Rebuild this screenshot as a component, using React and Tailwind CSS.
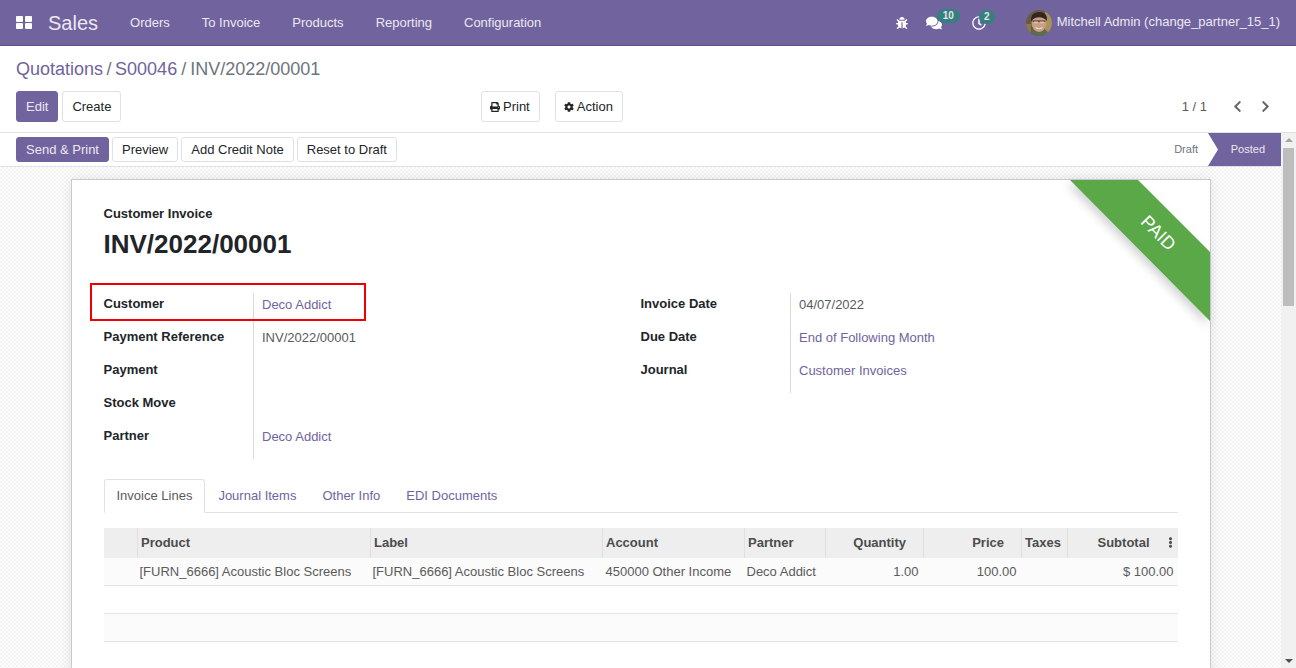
import React from "react";
import {
  FaBug,
  FaComments,
  FaRegClock,
  FaPrint,
  FaCog,
  FaChevronLeft,
  FaChevronRight,
  FaEllipsisV,
} from "react-icons/fa";

const navItems = ["Orders", "To Invoice", "Products", "Reporting", "Configuration"];

function AppsIcon() {
  return (
    <svg width="16" height="13" viewBox="0 0 16 13" fill="#fff">
      <rect x="0" y="0" width="7" height="6" rx="1" />
      <rect x="9" y="0" width="7" height="6" rx="1" />
      <rect x="0" y="7" width="7" height="6" rx="1" />
      <rect x="9" y="7" width="7" height="6" rx="1" />
    </svg>
  );
}

function Avatar() {
  return (
    <svg width="26" height="26" viewBox="0 0 26 26" className="rounded-full">
      <rect width="26" height="26" fill="#6a5a45" />
      <rect x="19" width="7" height="26" fill="#a8925f" />
      <rect y="14" width="5" height="12" fill="#8a7a4a" />
      <path d="M2 26 L6 20 L20 20 L25 26 Z" fill="#5f6b50" />
      <ellipse cx="13" cy="13" rx="7.5" ry="9" fill="#c99f84" />
      <path d="M5 12 Q4 2 13 2 Q22 2 21 11 Q17 6.5 11 7.5 Q7 8 5 12 Z" fill="#33261f" />
      <rect x="6.5" y="10.5" width="13" height="1.2" fill="#3d312b" />
      <rect x="8" y="11.5" width="4" height="1.8" fill="#dcc2b0" />
      <rect x="14" y="11.5" width="4" height="1.8" fill="#dcc2b0" />
      <path d="M9.5 17.5 Q13 20 16.5 17.5" stroke="#e8d8cc" strokeWidth="1.2" fill="none" />
    </svg>
  );
}

function Badge({ children, className }) {
  return (
    <span
      className={`absolute h-[14px] rounded-full bg-[#34807f] text-[10px] font-bold leading-[13px] text-[#e6e1ee] ${className}`}
    >
      {children}
    </span>
  );
}

function Navbar() {
  return (
    <header className="flex h-[46px] items-center border-b border-[#5d5283] bg-[#71639e] text-[13px] text-[#ebe8f1]">
      <div className="ml-4 flex w-[32px] items-center">
        <AppsIcon />
      </div>
      <span className="text-[20px] text-[#ebe8f1]">Sales</span>
      <nav className="ml-[32px] flex gap-[32px]">
        {navItems.map((item) => (
          <span key={item}>{item}</span>
        ))}
      </nav>
      <div className="ml-auto flex items-center pt-[1px]">
        <FaBug className="mr-[18px] text-[12px] text-white" />
        <span className="relative mr-[30px] text-white">
          <FaComments className="text-[16px]" />
          <Badge className="left-[11px] top-[-6px] w-[23px] text-center">10</Badge>
        </span>
        <span className="relative mr-[40px] text-white">
          <FaRegClock className="text-[14px]" />
          <Badge className="left-[7px] top-[-6px] w-[16px] text-center">2</Badge>
        </span>
        <Avatar />
        <span className="ml-[5px] mr-[16px] -translate-y-[1px]">Mitchell Admin (change_partner_15_1)</span>
      </div>
    </header>
  );
}

function Button({ primary, children, className = "px-[9px]" }) {
  return (
    <button
      className={`rounded-[3px] border text-[13px] ${
        primary
          ? "border-[#71639e] bg-[#71639e] text-[#ebe8f1]"
          : "border-[#dee2e6] bg-white text-[#212529]"
      } ${className}`}
    >
      {children}
    </button>
  );
}

function ControlPanel() {
  return (
    <div className="h-[87px] border-b border-[#dee2e6] bg-white px-4">
      <div className="flex h-[45px] items-center pt-[1px] text-[18px] text-[#71639e]">
        <span>Quotations</span>
        <span className="mx-[3.5px] text-[#6c757d]">/</span>
        <span>S00046</span>
        <span className="mx-[4px] text-[#6c757d]">/</span>
        <span className="text-[#6c757d]">INV/2022/00001</span>
      </div>
      <div className="flex h-[31px] items-stretch">
        <div className="flex w-[465px] gap-1">
          <Button primary>Edit</Button>
          <Button>Create</Button>
        </div>
        <div className="flex gap-[15px]">
          <Button className="flex items-center gap-[3px] pl-[8px] pr-[9px]">
            <FaPrint className="text-[10px]" /> Print
          </Button>
          <Button className="flex items-center gap-[3px] pl-[8px] pr-[9px]">
            <FaCog className="text-[10px]" /> Action
          </Button>
        </div>
        <div className="ml-auto flex items-center text-[13px] text-[#5a5a5a]">
          <span>1 / 1</span>
          <FaChevronLeft className="ml-[24px] text-[13px] text-[#666]" />
          <FaChevronRight className="ml-[15px] mr-[8px] text-[13px] text-[#666]" />
        </div>
      </div>
    </div>
  );
}

function StatusBar() {
  return (
    <div className="flex h-[34px] items-center border-b border-[#dee2e6] bg-white pl-4">
      <div className="flex gap-[3px]">
        <Button primary className="h-[25px] px-[9px]">Send &amp; Print</Button>
        <Button className="h-[25px] px-[9px]">Preview</Button>
        <Button className="h-[25px] px-[9px]">Add Credit Note</Button>
        <Button className="h-[25px] px-[9px]">Reset to Draft</Button>
      </div>
      <div className="ml-auto flex h-full items-center text-[11px]">
        <span className="mr-[9px] -translate-x-[1px] text-[#6c757d]">Draft</span>
        <span
          className="flex h-full w-[73px] items-center justify-end bg-[#71639e] pr-[16px] text-[#ebe8f1] [clip-path:polygon(0_0,100%_0,100%_100%,0_100%,10px_50%)]"
        >
          Posted
        </span>
      </div>
    </div>
  );
}

function Field({ label, value, link }) {
  return (
    <div className="flex h-[33px]">
      <div className="w-[150px] shrink-0 pt-[2px] text-[13px] font-bold leading-[17px] text-[#212529]">
        {label}
      </div>
      <div
        className={`pl-[8.5px] pt-[3px] text-[13px] leading-[17px] ${
          link ? "text-[#71639e]" : "text-[#5a5a5a]"
        }`}
      >
        {value}
      </div>
    </div>
  );
}

const columns = [
  ["", 34, "left"],
  ["Product", 233, "left"],
  ["Label", 232, "left"],
  ["Account", 142, "left"],
  ["Partner", 81, "left"],
  ["Quantity", 98, "right"],
  ["Price", 98, "right"],
  ["Taxes", 46, "left"],
  ["Subtotal", 110, "right"],
];

function LinesTable() {
  return (
    <table className="mt-[15px] w-[1074px] table-fixed border-collapse text-[13px] text-[#5a5a5a]">
      <colgroup>
        {columns.map(([name, width], i) => (
          <col key={i} style={{ width }} />
        ))}
      </colgroup>
      <thead>
        <tr className="h-[30px] bg-[#eeeeee] font-bold text-[#4c4c4c]">
          {columns.map(([name, , align], i) => (
            <th
              key={i}
              className={`relative border-l border-[#e0e0e0] px-[3px] font-bold first:border-l-0 ${
                align === "right" ? "text-right" : "text-left"
              } ${name === "Quantity" || name === "Price" ? "pr-[17px]" : ""} ${
                name === "Subtotal" ? "pr-[28px]" : ""
              }`}
            >
              {name}
              {name === "Subtotal" && (
                <FaEllipsisV className="absolute right-[2px] top-[9px] text-[11px] text-[#4c4c4c]" />
              )}
            </th>
          ))}
        </tr>
      </thead>
      <tbody>
        <tr className="h-[27px] border-b border-[#e4e4e4] bg-[#fbfbfb]">
          <td />
          <td className="px-[2px]">[FURN_6666] Acoustic Bloc Screens</td>
          <td className="px-[2px]">[FURN_6666] Acoustic Bloc Screens</td>
          <td className="px-[3px]">450000 Other Income</td>
          <td className="px-[2px]">Deco Addict</td>
          <td className="px-[5px] text-right">1.00</td>
          <td className="px-[5px] text-right">100.00</td>
          <td />
          <td className="px-[4px] text-right">$ 100.00</td>
        </tr>
        <tr className="h-[28px] border-b border-[#e4e4e4] bg-white">
          <td colSpan={9} />
        </tr>
        <tr className="h-[28px] border-b border-[#e4e4e4] bg-[#fbfbfb]">
          <td colSpan={9} />
        </tr>
      </tbody>
    </table>
  );
}

function Sheet() {
  return (
    <div className="relative mx-auto mt-[12px] h-[600px] w-[1140px] border border-[#c9c9d6] bg-white px-[32px] pt-[26px] shadow-[0_0_14px_rgba(0,0,0,0.1)]">
      {/* paid ribbon */}
      <svg
        className="absolute right-0 top-0 drop-shadow-[-3px_4px_5px_rgba(0,0,0,0.18)]"
        width="140"
        height="141"
        viewBox="0 0 140 141"
      >
        <polygon points="0,0 68,0 140,72 140,141" fill="#5aa848" />
      </svg>
      <span className="absolute right-[31px] top-[44px] rotate-45 text-[18px] leading-none text-white">PAID</span>

      <div className="text-[13px] font-bold leading-[16px] text-[#212529]">Customer Invoice</div>
      <h1 className="mt-[5px] text-[26px] font-bold leading-[34px] text-[#212529]">INV/2022/00001</h1>

      <div className="relative mt-[32px] flex">
        <div className="w-[537px]">
          <div className="relative w-[150px] border-r border-[#d9d9d9] pb-[1px]">
            <div className="w-[400px]">
              <Field label="Customer" value="Deco Addict" link />
              <Field label="Payment Reference" value="INV/2022/00001" />
              <Field label="Payment" value="" />
              <Field label="Stock Move" value="" />
              <Field label="Partner" value="Deco Addict" link />
            </div>
          </div>
        </div>
        <div className="self-start">
          <div className="w-[150px] border-r border-[#d9d9d9] pb-[1px]">
            <div className="w-[400px]">
              <Field label="Invoice Date" value="04/07/2022" />
              <Field label="Due Date" value="End of Following Month" link />
              <Field label="Journal" value="Customer Invoices" link />
            </div>
          </div>
        </div>
        {/* highlight box from the original capture */}
        <div className="absolute left-[-14px] top-[-10px] h-[38px] w-[276px] border-2 border-[#ee0000]" />
      </div>

      <div className="mt-[20px] flex h-[34px] border-b border-[#dee2e6] text-[13px] text-[#71639e]">
        <span className="z-10 flex h-[34px] items-center rounded-t-[3px] border border-[#dee2e6] border-b-white bg-white px-3 text-[#5a5a5a]">
          Invoice Lines
        </span>
        <span className="flex items-center px-[13px]">Journal Items</span>
        <span className="flex items-center px-[13px]">Other Info</span>
        <span className="flex items-center px-[13px]">EDI Documents</span>
      </div>

      <LinesTable />
    </div>
  );
}

function Scrollbar() {
  return (
    <div className="flex w-[15px] shrink-0 flex-col items-center bg-[#f1f1f1]">
      <div className="mt-[5px] h-0 w-0 border-x-[4px] border-b-[4px] border-x-transparent border-b-[#a3a3a3]" />
      <div className="mt-[6px] h-[158px] w-[11px] bg-[#bdbdbd]" />
      <div className="mb-[5px] mt-auto h-0 w-0 border-x-[4px] border-t-[4px] border-x-transparent border-t-[#505050]" />
    </div>
  );
}

export default function App() {
  return (
    <div className="h-[668px] w-[1296px] overflow-hidden bg-white font-['Liberation_Sans',Arial,sans-serif]">
      <Navbar />
      <ControlPanel />
      <div className="flex h-[535px] flex-col">
        <div className="flex h-full">
          <div className="min-w-0 flex-1">
            <StatusBar />
            <div className="h-[501px] overflow-hidden bg-[repeating-conic-gradient(#f3f3f3_0%_25%,#ffffff_0%_50%)] bg-[length:4px_4px]">
              <Sheet />
            </div>
          </div>
          <Scrollbar />
        </div>
      </div>
    </div>
  );
}
